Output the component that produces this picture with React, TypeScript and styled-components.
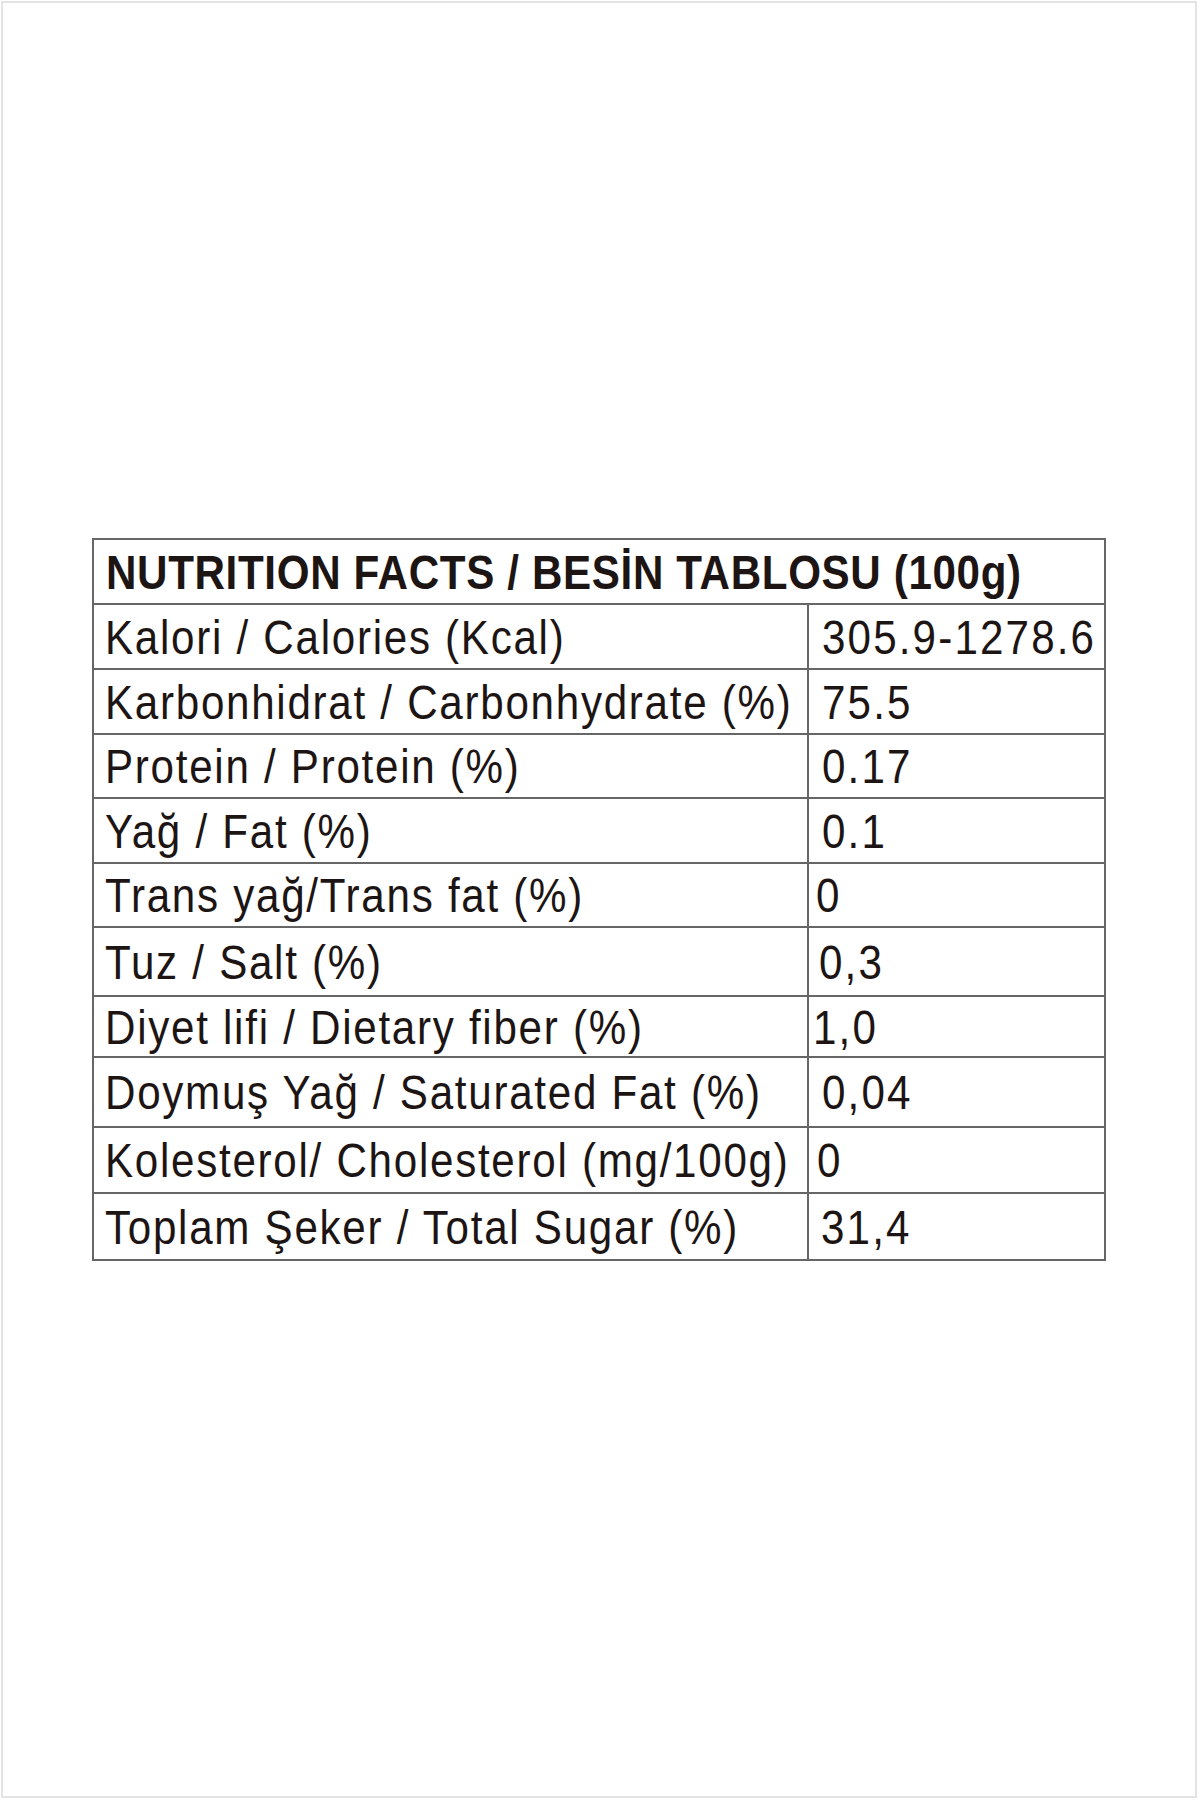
import styled, { createGlobalStyle } from 'styled-components'

const GlobalStyle = createGlobalStyle`
  html, body {
    margin: 0;
    padding: 0;
    background: #fff;
  }
`

type Row = { label: string; value: string; height: number; indent: number }

const rows: Row[] = [
  { label: 'Kalori / Calories (Kcal)', value: '305.9-1278.6', height: 63, indent: 13 },
  { label: 'Karbonhidrat / Carbonhydrate (%)', value: '75.5', height: 63, indent: 13 },
  { label: 'Protein / Protein (%)', value: '0.17', height: 62, indent: 13 },
  { label: 'Yağ / Fat (%)', value: '0.1', height: 63, indent: 13 },
  { label: 'Trans yağ/Trans fat (%)', value: '0', height: 62, indent: 7 },
  { label: 'Tuz / Salt (%)', value: '0,3', height: 67, indent: 10 },
  { label: 'Diyet lifi / Dietary fiber (%)', value: '1,0', height: 59, indent: 4 },
  { label: 'Doymuş Yağ / Saturated Fat (%)', value: '0,04', height: 68, indent: 13 },
  { label: 'Kolesterol/ Cholesterol (mg/100g)', value: '0', height: 64, indent: 8 },
  { label: 'Toplam Şeker / Total Sugar (%)', value: '31,4', height: 65, indent: 12 },
]

export default function App() {
  return (
    <>
      <GlobalStyle />
      <Frame>
        <Table>
          <Header>
            <Text $spacing={0.75}>NUTRITION FACTS / BESİN TABLOSU (100g)</Text>
          </Header>
          {rows.map((r) => (
            <TableRow key={r.label} $height={r.height}>
              <Label>
                <Text $spacing={2}>{r.label}</Text>
              </Label>
              <Value $indent={r.indent}>
                <Text $spacing={2.5}>{r.value}</Text>
              </Value>
            </TableRow>
          ))}
        </Table>
      </Frame>
    </>
  )
}

const Frame = styled.div`
  box-sizing: border-box;
  margin: 1px;
  width: 1196px;
  height: 1797px;
  border: 2px solid #e3e3e3;
  display: grid;
  place-items: center;
`

const Table = styled.div`
  width: 1014px;
  border: 2px solid #666;
  box-sizing: border-box;
  display: flex;
  flex-direction: column;
  color: #1d1514;
  font-family: 'Liberation Sans', Arial, sans-serif;
  font-size: 49px;
`

// the printed label uses a condensed grotesque; squeeze Liberation Sans to match
const Text = styled.span<{ $spacing: number }>`
  display: inline-block;
  white-space: nowrap;
  letter-spacing: ${(p) => p.$spacing}px;
  transform: scaleX(0.86);
  transform-origin: left center;
`

const Header = styled.div`
  height: 63px;
  display: flex;
  align-items: center;
  padding-left: 12px;
  font-weight: 700;
  overflow: hidden;
`

const TableRow = styled.div<{ $height: number }>`
  height: ${(p) => p.$height}px;
  border-top: 2px solid #666;
  display: grid;
  grid-template-columns: 713px 1fr;
`

const Label = styled.div`
  display: flex;
  align-items: center;
  padding-left: 11px;
  min-width: 0;
`

const Value = styled.div<{ $indent: number }>`
  display: flex;
  align-items: center;
  border-left: 2px solid #666;
  padding-left: ${(p) => p.$indent}px;
  min-width: 0;
`
